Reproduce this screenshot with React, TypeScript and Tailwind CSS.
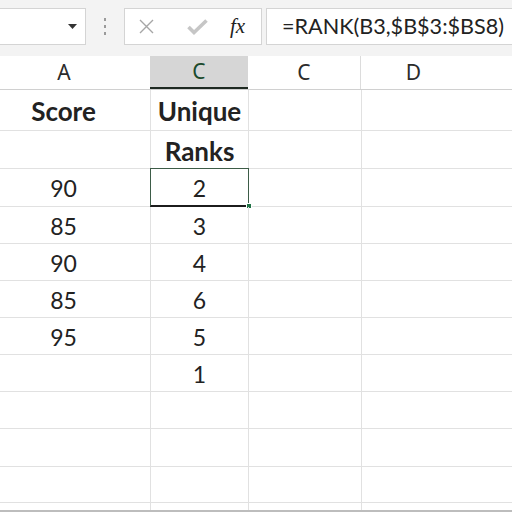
import React from 'react';

const rows: { a: string; c: string; h: string; bold?: boolean }[] = [
  { a: 'Score', c: 'Unique', h: 'h-[41px]', bold: true },
  { a: '', c: 'Ranks', h: 'h-[38px]', bold: true },
  { a: '90', c: '2', h: 'h-[38px]' },
  { a: '85', c: '3', h: 'h-[37px]' },
  { a: '90', c: '4', h: 'h-[37px]' },
  { a: '85', c: '6', h: 'h-[37px]' },
  { a: '95', c: '5', h: 'h-[37px]' },
  { a: '', c: '1', h: 'h-[37px]' },
  { a: '', c: '', h: 'h-[37px]' },
  { a: '', c: '', h: 'h-[38px]' },
  { a: '', c: '', h: 'h-[36px]' },
];

const cellFont = { fontFamily: 'Lato, "Open Sans", sans-serif' };

export default function App() {
  return (
    <div className="w-[512px] h-[512px] overflow-hidden bg-white select-none">
      {/* formula bar */}
      <div className="h-[56px] bg-[#f3f3f3] flex items-start pt-[8px]">
        <div className="w-[86px] h-[37px] bg-white border border-l-0 border-[#d4d4d4] flex items-center justify-end pr-[8px]">
          <svg width="9" height="5" viewBox="0 0 9 5">
            <path d="M0 0h9L4.5 5z" fill="#333" />
          </svg>
        </div>
        <div className="w-[38px] h-[37px] flex flex-col items-center justify-center gap-[4px]">
          <span className="w-[2px] h-[3px] bg-[#9a9a9a]" />
          <span className="w-[2px] h-[3px] bg-[#9a9a9a]" />
          <span className="w-[2px] h-[3px] bg-[#9a9a9a]" />
        </div>
        <div className="w-[138px] h-[37px] bg-white border border-[#d4d4d4] flex items-center">
          <svg className="ml-[14px]" width="15" height="15" viewBox="0 0 15 15">
            <path d="M1 1l13 13M14 1L1 14" stroke="#a6a6a6" strokeWidth="1.4" />
          </svg>
          <svg className="ml-[33px]" width="21" height="16" viewBox="0 0 21 16">
            <path d="M1.5 8l5.5 5.5L19.5 1.5" stroke="#c6c6c6" strokeWidth="3.6" fill="none" />
          </svg>
          <span
            className="ml-[22px] text-[21px] italic text-[#222] leading-none"
            style={{ fontFamily: '"Liberation Serif", serif' }}
          >
            fx
          </span>
        </div>
        <div className="ml-[4px] flex-1 h-[37px] bg-white border border-r-0 border-[#d4d4d4] flex items-center pl-[15px]">
          <span className="text-[21.6px] text-[#222] leading-none whitespace-nowrap" style={cellFont}>
            =RANK(B3,$B$3:$BS8)
          </span>
        </div>
      </div>

      {/* column headers */}
      <div className="flex h-[34px] border-b border-[#d0d0d0] text-[21px] text-[#2b2b2b]" style={{ fontFamily: '"Noto Sans", sans-serif' }}>
        <div className="w-[150px] flex items-center justify-center pr-[22px] bg-white">A</div>
        <div className="w-[98px] flex items-center justify-center bg-[#d6d6d6] text-[#1b4a2c] border-b-2 border-[#1f2a22]">C</div>
        <div className="w-[113px] flex items-center justify-center border-r border-[#dcdcdc]">C</div>
        <div className="flex-1 flex items-center justify-center pr-[46px]">D</div>
      </div>

      {/* cells */}
      <div style={cellFont} className="text-[23px] text-[#222]">
        {rows.map((r, i) => (
          <div key={i} className={`flex ${r.h} border-b border-[#e1e1e1]`}>
            <div className={`w-[151px] border-r border-[#e1e1e1] flex items-center justify-center pr-[23px] ${r.bold ? 'font-bold text-[26px] pt-[3px]' : 'pt-[2px]'}`}>
              {r.a}
            </div>
            <div className={`relative w-[98px] border-r border-[#e1e1e1] flex items-center justify-center ${r.bold ? 'font-bold text-[26px] pt-[3px]' : 'pt-[2px]'}`}>
              {r.c}
              {i === 2 && (
                <div className="absolute -top-px -left-px -right-px -bottom-px border border-[#3d5c47] border-b-2 border-b-[#1c1c1c]">
                  <div className="absolute -right-[4px] -bottom-[4px] w-[6px] h-[6px] bg-[#217346] border border-white" />
                </div>
              )}
            </div>
            <div className="w-[113px] border-r border-[#e1e1e1]" />
            <div className="flex-1" />
          </div>
        ))}
        <div className="flex h-[9px] border-b-2 border-[#bdbdbd]">
          <div className="w-[151px] border-r border-[#e1e1e1]" />
          <div className="w-[98px] border-r border-[#e1e1e1]" />
          <div className="w-[113px] border-r border-[#e1e1e1]" />
        </div>
      </div>
    </div>
  );
}
